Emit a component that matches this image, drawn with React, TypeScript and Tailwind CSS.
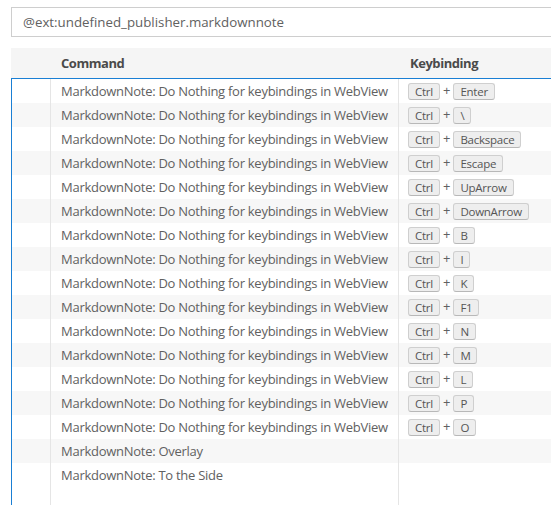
const rows: { cmd: string; key?: string }[] = [
  { cmd: "MarkdownNote: Do Nothing for keybindings in WebView", key: "Enter" },
  { cmd: "MarkdownNote: Do Nothing for keybindings in WebView", key: "\\" },
  { cmd: "MarkdownNote: Do Nothing for keybindings in WebView", key: "Backspace" },
  { cmd: "MarkdownNote: Do Nothing for keybindings in WebView", key: "Escape" },
  { cmd: "MarkdownNote: Do Nothing for keybindings in WebView", key: "UpArrow" },
  { cmd: "MarkdownNote: Do Nothing for keybindings in WebView", key: "DownArrow" },
  { cmd: "MarkdownNote: Do Nothing for keybindings in WebView", key: "B" },
  { cmd: "MarkdownNote: Do Nothing for keybindings in WebView", key: "I" },
  { cmd: "MarkdownNote: Do Nothing for keybindings in WebView", key: "K" },
  { cmd: "MarkdownNote: Do Nothing for keybindings in WebView", key: "F1" },
  { cmd: "MarkdownNote: Do Nothing for keybindings in WebView", key: "N" },
  { cmd: "MarkdownNote: Do Nothing for keybindings in WebView", key: "M" },
  { cmd: "MarkdownNote: Do Nothing for keybindings in WebView", key: "L" },
  { cmd: "MarkdownNote: Do Nothing for keybindings in WebView", key: "P" },
  { cmd: "MarkdownNote: Do Nothing for keybindings in WebView", key: "O" },
  { cmd: "MarkdownNote: Overlay" },
  { cmd: "MarkdownNote: To the Side" },
];

function Kbd({ children }: { children: string }) {
  return (
    <span className="inline-flex h-[17px] items-center rounded-[3px] border border-[#cfcfcf] border-b-[#b8b8b8] bg-[#eeeeee] px-[6px] pt-[1px] text-[11.5px] leading-none tracking-[-0.25px] text-[#555]">
      {children}
    </span>
  );
}

function App() {
  return (
    <div className="h-[505px] w-[551px] overflow-hidden bg-white font-['Open_Sans',sans-serif] text-[13px] text-[#616161]">
      <div className="flex h-full w-[620px] flex-col pl-[11px] pt-[7px]">
        <div className="flex h-[30px] items-center border border-[#cecece] pl-[11px] pt-[1px] text-[13.3px]">
          @ext:undefined_publisher.markdownnote
        </div>

        <div className="mt-[11px] flex h-[30px] items-center bg-[#f5f5f5] pt-[2px] font-bold tracking-[-0.45px] text-[#4a4a4a]">
          <div className="w-[40px]" />
          <div className="w-[348px] pl-[10px]">Command</div>
          <div className="pl-[11px]">Keybinding</div>
        </div>

        <div className="flex flex-1 flex-col border-l border-t border-[#1a7fd4]">
          {rows.map((r, i) => (
            <div
              key={i}
              className={`flex h-[24px] items-center ${i % 2 === 1 ? "bg-[#f7f7f7]" : "bg-white"}`}
            >
              <div className="h-full w-[39px] border-r border-[#e5e5e5]" />
              <div className="flex h-full w-[348px] items-center border-r border-[#e5e5e5] pl-[10px] pt-[2px] tracking-[-0.27px] whitespace-nowrap">
                {r.cmd}
              </div>
              <div className="flex items-center gap-[3px] pl-[9px]">
                {r.key && (
                  <>
                    <Kbd>Ctrl</Kbd>
                    <span className="text-[13px]">+</span>
                    <Kbd>{r.key}</Kbd>
                  </>
                )}
              </div>
            </div>
          ))}
          <div className="flex flex-1">
            <div className="w-[39px] border-r border-[#e5e5e5]" />
            <div className="w-[348px] border-r border-[#e5e5e5]" />
          </div>
        </div>
      </div>
    </div>
  );
}

export default App;
